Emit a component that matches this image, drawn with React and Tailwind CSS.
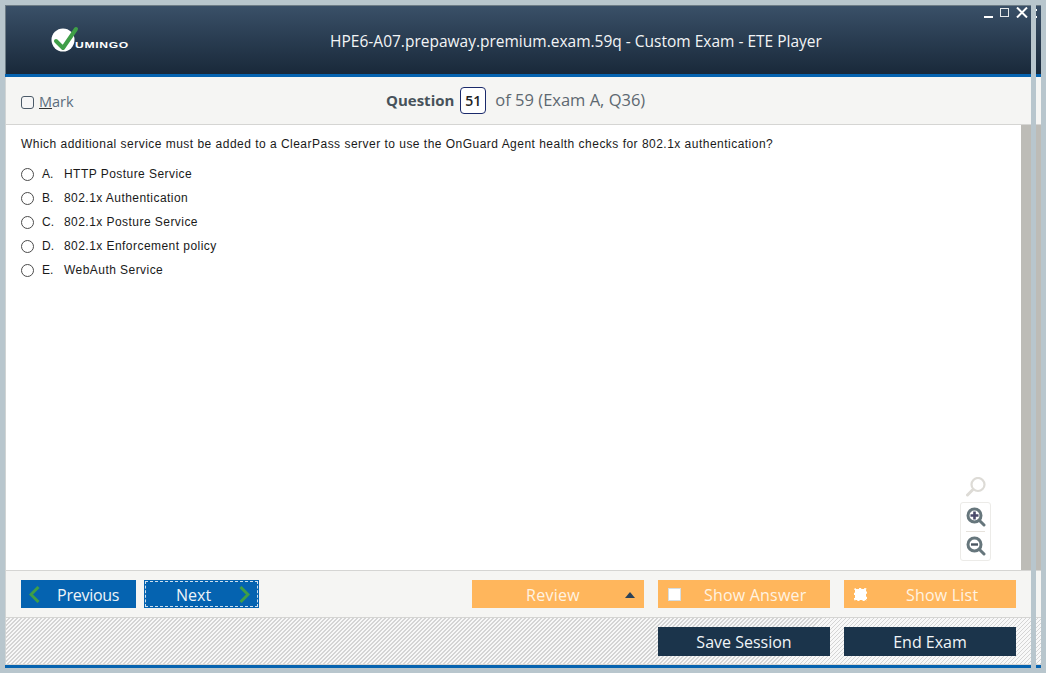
const options = [
  ["A.", "HTTP Posture Service"],
  ["B.", "802.1x Authentication"],
  ["C.", "802.1x Posture Service"],
  ["D.", "802.1x Enforcement policy"],
  ["E.", "WebAuth Service"],
];

function Logo() {
  return (
    <div className="flex items-end ml-[45px] relative h-[28px] w-[85px]">
      <svg width="30" height="28" viewBox="0 0 30 28" className="absolute left-0 top-0">
        <circle cx="12" cy="14" r="11.5" fill="#fff" />
        <path d="M5 15 L12 22 L25 3" fill="none" stroke="#3f9e47" strokeWidth="4" strokeLinecap="round" strokeLinejoin="round" />
      </svg>
      <span className="ml-[24px] mb-[4px] text-[9px] leading-[10px] font-bold tracking-[0.5px] text-white font-['Liberation_Sans',sans-serif] [transform:scaleX(1.35)] origin-left">UMINGO</span>
    </div>
  );
}

function Zoom({ minus, plus, faded }) {
  const color = faded ? "#dddbd6" : "#66767c";
  return (
    <svg width="20" height="20" viewBox="0 0 20 20">
      <circle cx={faded ? 12 : 8.5} cy={faded ? 7.5 : 8.5} r="6.5" fill="none" stroke={color} strokeWidth={faded ? 2.2 : 3} />
      <path d={faded ? "M6.5 13 L1.5 18" : "M13.5 13.5 L18 18"} stroke={color} strokeWidth="3" strokeLinecap="round" />
      {minus && <path d="M5 8.5 H12" stroke="#4a5560" strokeWidth="2.4" />}
      {plus && <path d="M4.5 8.5 H12.5 M8.5 4.5 V12.5" stroke="#4a4a6a" strokeWidth="2.6" />}
    </svg>
  );
}

function Arrow({ right, className }) {
  return (
    <svg width="11" height="17" viewBox="0 0 11 17" className={className}>
      <path d={right ? "M1.5 1 L9 8.5 L1.5 16" : "M9.5 1 L2 8.5 L9.5 16"} fill="none" stroke="#3f9e47" strokeWidth="3" />
    </svg>
  );
}

export default function App() {
  return (
    <div className="relative w-[1046px] h-[673px] overflow-hidden bg-[#b8c6cd] p-[5px] font-['Open_Sans',sans-serif]">
      <div className="flex flex-col h-full bg-white border-l border-[#d0d4d4]">
        {/* title bar */}
        <div className="relative flex items-center h-[69px] shrink-0 -ml-px bg-gradient-to-b from-[#3a5068] to-[#19293a] border-t border-l border-[#6d7c86]">
          <Logo />
          <div className="absolute left-[105px] right-0 top-[24px] text-center text-[15.5px] leading-[22px] text-[#f3f5f6]">
            HPE6-A07.prepaway.premium.exam.59q - Custom Exam - ETE Player
          </div>
          <div className="absolute right-[13px] top-[1px] flex items-center gap-[7px]">
            <div className="w-[9px] h-[2px] bg-white mt-[9px]" />
            <div className="w-[9px] h-[9px] border-[1.5px] border-[#e6eaec]" />
            <svg width="12" height="11" viewBox="0 0 12 11">
              <path d="M1 0.5 L11 10.5 M11 0.5 L1 10.5" stroke="#fff" strokeWidth="2" />
            </svg>
          </div>
        </div>
        <div className="h-[3px] shrink-0 -ml-px bg-[#0563b0]" />

        {/* mark + question number */}
        <div className="relative flex items-center h-[48px] shrink-0 bg-[#f5f5f3] border-b border-[#d5d5d3] pl-[15px] pt-[3px]">
          <input type="checkbox" className="w-[13px] h-[13px] m-0 appearance-none bg-[#f6f6f6] border border-[#4b5a68] rounded-[3px]" readOnly />
          <span className="ml-[5px] text-[14.5px] text-[#5b6d7d]"><span className="underline decoration-[#333]">M</span>ark</span>
          <div className="absolute left-[380px] top-[10px] flex items-center text-[16.5px] text-[#5d6870]">
            <span className="text-[15px] font-bold text-[#47525a]">Question</span>
            <span className="ml-[6px] w-[26px] h-[27px] flex items-center justify-center bg-white border border-[#1b2a6b] rounded-[4px] text-[14px] font-semibold text-[#222]">51</span>
            <span className="ml-[9px]">of 59 (Exam A, Q36)</span>
          </div>
        </div>

        {/* question */}
        <div className="relative flex flex-1 min-h-0">
          <div className="flex-1 pl-[15px] pt-[11px] font-['Liberation_Sans',sans-serif] text-[12px] leading-[16px] text-[#1a1a1a]">
            <p className="tracking-[0.48px]">Which additional service must be added to a ClearPass server to use the OnGuard Agent health checks for 802.1x authentication?</p>
            <div className="mt-[10px] flex flex-col">
              {options.map(([letter, text]) => (
                <div key={letter} className="flex items-center h-[24px]">
                  <span className="w-[13px] h-[13px] rounded-full border border-[#4b4b4b] bg-white" />
                  <span className="ml-[8px] w-[22px]">{letter}</span>
                  <span className="tracking-[0.45px]">{text}</span>
                </div>
              ))}
            </div>
          </div>
          <div className="w-[20px] shrink-0 bg-[#bdbcb7]" />
          <div className="absolute right-[50px] bottom-[9px] flex flex-col items-center">
            <div className="mb-[5px]"><Zoom faded /></div>
            <div className="flex flex-col items-center w-[31px] h-[59px] bg-white border border-[#ecebe8] rounded-[3px] pt-[4px]">
              <Zoom plus />
              <div className="w-[19px] h-px bg-[#e6e2dc] my-[4px]" />
              <Zoom minus />
            </div>
          </div>
        </div>

        {/* navigation */}
        <div className="flex items-center h-[48px] shrink-0 bg-[#f5f5f3] border-y border-[#d5d5d3] pl-[15px] text-[16px] text-[#eef4f8]">
          <button className="relative w-[115px] h-[28px] bg-[#0563b0] pl-[36px] pt-[2px] text-left tracking-[-0.25px]">
            <Arrow className="absolute left-[8px] top-[6px]" />
            Previous
          </button>
          <button className="relative w-[115px] h-[28px] ml-[8px] bg-[#0563b0] pl-[32px] pt-[2px] text-left outline-1 -outline-offset-2 outline-dashed outline-[#cfe0ee]">
            Next
            <Arrow right className="absolute right-[9px] top-[6px]" />
          </button>
          <button className="relative w-[172px] h-[28px] ml-[213px] bg-[#ffb65c] pl-[54px] pt-[2px] text-left text-[#fff3e2] tracking-[0.3px]">
            Review
            <span className="absolute left-[153px] top-[12px] w-0 h-0 border-x-[5px] border-x-transparent border-b-[6px] border-b-[#2b4258]" />
          </button>
          <button className="flex items-center w-[172px] h-[28px] ml-[14px] bg-[#ffb65c] pl-[10px] text-[#fff3e2]">
            <span className="w-[13px] h-[13px] bg-white border border-[#d5dde2]" />
            <span className="ml-[23px] pt-[2px] tracking-[0.2px]">Show Answer</span>
          </button>
          <button className="flex items-center w-[172px] h-[28px] ml-[14px] bg-[#ffb65c] pl-[10px] text-[#fff3e2]">
            <span className="w-[13px] h-[13px] bg-white rounded-[2px] outline-1 -outline-offset-1 outline-dashed outline-[#ffb65c]" />
            <span className="ml-[39px] pt-[2px] tracking-[0.2px]">Show List</span>
          </button>
        </div>

        {/* session */}
        <div className="flex items-start justify-end h-[47px] shrink-0 pt-[9px] pr-[25px] gap-[14px] border-b border-[#d5d5d3] bg-[repeating-linear-gradient(135deg,#f8f8f8_0px,#f8f8f8_1.8px,#d4d4d4_1.8px,#d4d4d4_2.83px)] text-[16px] text-[#f1f5f8]">
          <button className="w-[172px] h-[29px] bg-[#1b344b]">Save Session</button>
          <button className="w-[172px] h-[29px] bg-[#1b344b]">End Exam</button>
        </div>
        <div className="h-[3px] shrink-0 -ml-px bg-[#0563b0]" />
      </div>
      {/* light strip drawn over the window */}
      <div className="absolute left-[1031px] top-0 bottom-0 w-[5px] bg-[#b8c6cd]" />
      <div className="absolute left-[1036px] top-[9px] w-px h-[2px] bg-white" />
      <div className="absolute left-[1036px] top-[16px] w-px h-[2px] bg-white" />
    </div>
  );
}
